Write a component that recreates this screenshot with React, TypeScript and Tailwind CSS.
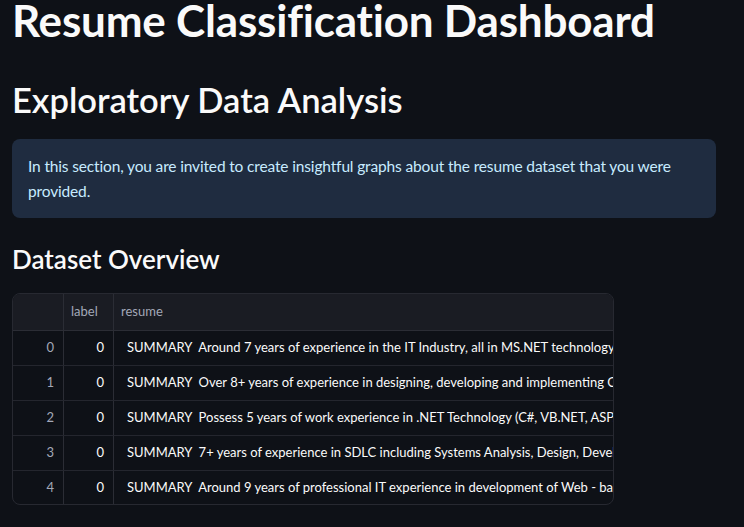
import React from "react";

const rows = [
  "SUMMARY  Around 7 years of experience in the IT Industry, all in MS.NET technology, including",
  "SUMMARY  Over 8+ years of experience in designing, developing and implementing Client-Server",
  "SUMMARY  Possess 5 years of work experience in .NET Technology (C#, VB.NET, ASP.NET, ADO",
  "SUMMARY  7+ years of experience in SDLC including Systems Analysis, Design, Development, Testing",
  "SUMMARY  Around 9 years of professional IT experience in development of Web - based applications",
];

export default function App() {
  return (
    <div
      className="w-[744px] h-[527px] overflow-hidden bg-[#0e1117] text-[#fafafa]"
      style={{ fontFamily: "Lato, 'Noto Sans', sans-serif" }}
    >
      <div className="px-[12px] w-[728px]">
        <h1 className="text-[44px] font-bold leading-[40px] tracking-[-0.2px]">
          Resume Classification Dashboard
        </h1>
        <h2 className="text-[34.5px] font-semibold leading-[44px] mt-[38px]">
          Exploratory Data Analysis
        </h2>
        <div className="mt-[17px] rounded-[8px] bg-[#1f2c40] px-[16px] pt-[15px] pb-[14px] text-[15.5px] leading-[25px] tracking-[-0.15px] text-[#c7ebff]">
          In this section, you are invited to create insightful graphs about the resume dataset that you were
          provided.
        </div>
        <h3 className="text-[26px] font-semibold leading-[34px] mt-[24px]">Dataset Overview</h3>
        <div className="mt-[17px] w-[602px] overflow-hidden rounded-[8px] border border-[#272931] text-[13px]">
          <div className="flex h-[37px] bg-[#1a1c23] text-[#a3a8b8] border-b border-[#2b2d35]">
            <div className="w-[51px] shrink-0 border-r border-[#2b2d35]" />
            <div className="w-[50px] shrink-0 border-r border-[#2b2d35] flex items-center pl-[7px]">label</div>
            <div className="flex-1 flex items-center pl-[7px]">resume</div>
          </div>
          {rows.map((r, i) => (
            <div
              key={i}
              className={
                i < rows.length - 1 ? "flex h-[35px] border-b border-[#24262e]" : "flex h-[33px]"
              }
            >
              <div className="w-[51px] shrink-0 border-r border-[#2b2d35] flex items-center justify-end pr-[9px] text-[#a3a8b8]">
                {i}
              </div>
              <div className="w-[50px] shrink-0 border-r border-[#2b2d35] flex items-center justify-end pr-[9px]">
                0
              </div>
              <div className="flex-1 flex items-center pl-[13px] whitespace-pre overflow-hidden">{r}</div>
            </div>
          ))}
        </div>
      </div>
    </div>
  );
}
